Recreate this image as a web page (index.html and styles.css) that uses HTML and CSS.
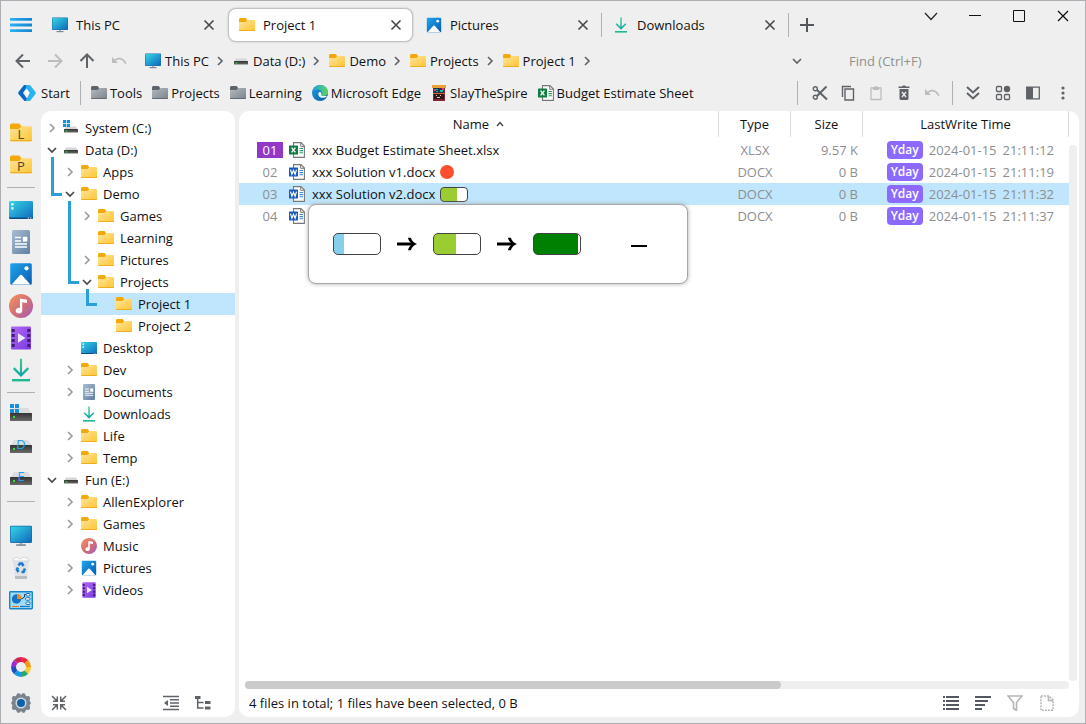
FILE: index.html
```html
<!DOCTYPE html>
<html lang="en">
<head>
<meta charset="utf-8">
<meta name="viewport" content="width=device-width, initial-scale=1">
<title>Project 1</title>
<link rel="stylesheet" href="styles.css">
</head>
<body>
<svg class="defs" aria-hidden="true">
  <defs>
    <linearGradient id="gFolder" x1="0" y1="0" x2="1" y2="1"><stop offset="0" stop-color="#ffe59c"/><stop offset="1" stop-color="#ffc533"/></linearGradient>
    <linearGradient id="gGray" x1="0" y1="0" x2="1" y2="1"><stop offset="0" stop-color="#b5babf"/><stop offset="1" stop-color="#7b838b"/></linearGradient>
    <linearGradient id="gScreen" x1="0" y1="0" x2="1" y2="1"><stop offset="0" stop-color="#35d6e4"/><stop offset="1" stop-color="#0f68bd"/></linearGradient>
    <linearGradient id="gPic" x1="0" y1="0" x2="1" y2="1"><stop offset="0" stop-color="#1ea5ee"/><stop offset="1" stop-color="#0a5cb0"/></linearGradient>
    <linearGradient id="gDoc" x1="0" y1="0" x2="1" y2="1"><stop offset="0" stop-color="#a9bdd2"/><stop offset="1" stop-color="#607fa2"/></linearGradient>
    <linearGradient id="gMusic" x1="0" y1="0" x2="1" y2="1"><stop offset="0" stop-color="#f7935a"/><stop offset=".55" stop-color="#cf6e77"/><stop offset="1" stop-color="#a05cc0"/></linearGradient>
    <linearGradient id="gVideo" x1="0" y1="0" x2="1" y2="1"><stop offset="0" stop-color="#b268f5"/><stop offset="1" stop-color="#7a3be0"/></linearGradient>
    <linearGradient id="gDown" x1="0" y1="0" x2="0" y2="1"><stop offset="0" stop-color="#37cf8a"/><stop offset="1" stop-color="#0fa3a6"/></linearGradient>
    <linearGradient id="gDrive" x1="0" y1="0" x2="0" y2="1"><stop offset="0" stop-color="#333"/><stop offset="1" stop-color="#6a6a6a"/></linearGradient>
    <linearGradient id="gMenu" x1="0" y1="0" x2="1" y2="0"><stop offset="0" stop-color="#2bb0f5"/><stop offset="1" stop-color="#1583cf"/></linearGradient>
    <linearGradient id="gEdge" x1="0" y1="0" x2="1" y2="1"><stop offset="0" stop-color="#1a9be0"/><stop offset="1" stop-color="#0c59a4"/></linearGradient>
    <linearGradient id="gEdgeTop" x1="0" y1="0" x2="1" y2="0"><stop offset="0" stop-color="#1d9fe2"/><stop offset="1" stop-color="#5fd65c"/></linearGradient>
  </defs>
  <symbol id="folder" viewBox="0 0 16 16"><path d="M0 2.500Q0 1 1.200 1H6.500L8 2.500V5H0Z" fill="#f3a90a"/><path d="M0 5H6.500L8.500 3H15Q16 3 16 4V13Q16 14 15 14H1Q0 14 0 13Z" fill="url(#gFolder)"/><path d="M0 13H16Q16 14 15 14H1Q0 14 0 13Z" fill="#eeae22"/></symbol>
  <symbol id="folder-gray" viewBox="0 0 16 16"><path d="M0 2.500Q0 1 1.200 1H6.500L8 2.500V5H0Z" fill="#5d646b"/><path d="M0 5H6.500L8.500 3H15Q16 3 16 4V13Q16 14 15 14H1Q0 14 0 13Z" fill="url(#gGray)"/><path d="M0 13H16Q16 14 15 14H1Q0 14 0 13Z" fill="#626a72"/></symbol>
  <symbol id="pc" viewBox="0 0 16 16"><path d="M7 12H9V14.500H7Z" fill="#aab2ba"/><rect x="4.500" y="14" width="7" height="1.200" fill="#7f8a94"/><rect width="16" height="12.500" y=".5" rx=".8" fill="#1b6aa5"/><rect x=".5" y="1" width="15" height="11.500" rx=".4" fill="url(#gScreen)"/></symbol>
  <symbol id="desktop" viewBox="0 0 16 16"><rect y="2" width="16" height="12" rx=".9" fill="url(#gScreen)"/><path d="M1.500 3.500H3V5H1.500ZM1.500 6.200H3V7.700H1.500Z" fill="#fff"/><path d="M0 13H16Q16 14 15 14H1Q0 14 0 13Z" fill="#0c4c85"/><path d="M12.500 13H13.300V13.600H12.500ZM14.100 13H14.900V13.600H14.100Z" fill="#fff"/></symbol>
  <symbol id="document" viewBox="0 0 16 16"><rect x="2" width="12" height="16" rx="1" fill="url(#gDoc)"/><path d="M4 5H8M4 7.300H8M4 9.300H12M4 11.300H12" stroke="#fff" stroke-width=".9"/><rect x="9.200" y="4.500" width="3" height="3.200" fill="#fff"/></symbol>
  <symbol id="picture" viewBox="0 0 16 16"><rect x=".8" y=".8" width="14.400" height="14.400" rx="1" fill="url(#gPic)"/><path d="M1.800 15L7.300 8.800Q8 8.100 8.700 8.800L14.200 15Z" fill="#fff"/><circle cx="11.700" cy="4.200" r="1.400" fill="#fff"/></symbol>
  <symbol id="music" viewBox="0 0 16 16"><circle cx="8" cy="8" r="8" fill="url(#gMusic)"/><path d="M7.300 3L12 3.800V6L8.800 5.500V11A2.200 1.900 0 1 1 7.300 9.300Z" fill="#fff"/></symbol>
  <symbol id="video" viewBox="0 0 16 16"><rect x="1.300" y=".3" width="13.400" height="15.400" rx=".8" fill="url(#gVideo)"/><path d="M1.800 2H3.800V4H1.800ZM1.800 5.300H3.800V7.300H1.800ZM1.800 8.700H3.800V10.700H1.800ZM1.800 12H3.800V14H1.800ZM12.200 2H14.200V4H12.200ZM12.200 5.300H14.200V7.300H12.200ZM12.200 8.700H14.200V10.700H12.200ZM12.200 12H14.200V14H12.200Z" fill="#3c1d78"/><path d="M6 4.800L11 8L6 11.200Z" fill="#f0e8ff"/></symbol>
  <symbol id="download" viewBox="0 0 16 16"><path d="M7.300 .5H8.700V9.800L12.300 6.200L13.400 7.300L8 12.700L2.600 7.300L3.700 6.200L7.300 9.800Z" fill="url(#gDown)"/><rect x="2" y="14" width="12" height="1.600" fill="#1dba93"/></symbol>
  <symbol id="drive" viewBox="0 0 16 16"><path d="M3 5.500H13L15 9H1Z" fill="#d6d6da"/><rect x="1" y="8" width="14" height="3.600" rx=".5" fill="url(#gDrive)"/><rect x="2.800" y="9.200" width="1.400" height="1.300" fill="#2fe03a"/></symbol>
  <symbol id="drive-c" viewBox="0 0 16 16"><path d="M3 6.500H13L15 10H1Z" fill="#d6d6da"/><rect x="1" y="9" width="14" height="3.600" rx=".5" fill="url(#gDrive)"/><rect x="2.800" y="10.200" width="1.400" height="1.300" fill="#2fe03a"/><path d="M0 0H3.200V3.200H0ZM3.900 0H7V3.200H3.900ZM0 3.900H3.200V7H0ZM3.900 3.900H7V7H3.900Z" fill="#1490df"/></symbol>
  <symbol id="drive-lg" viewBox="0 0 24 24"><path d="M5 5H19L23 11H1Z" fill="#dcdce0"/><rect x="1" y="10" width="22" height="8" rx=".6" fill="url(#gDrive)"/><rect x="4" y="13" width="2" height="2" fill="#2fe03a"/></symbol>
  <symbol id="drive-c-lg" viewBox="0 0 24 24"><path d="M5 5H19L23 11H1Z" fill="#dcdce0"/><rect x="1" y="10" width="22" height="8" rx=".6" fill="url(#gDrive)"/><rect x="4" y="13" width="2" height="2" fill="#2fe03a"/><path d="M1 1H5V5H1ZM6 1H10V5H6ZM1 6H5V10H1ZM6 6H10V10H6Z" fill="#1490df"/></symbol>
  <symbol id="xlsx" viewBox="0 0 16 16"><path d="M4.500 .6H12L15.400 4V15.400H4.500Z" fill="#fff" stroke="#777" stroke-width="1.100"/><path d="M11.700 .6V4.300H15.400" fill="none" stroke="#777"/><path d="M10.500 6.500H14M10.500 8.600H14M10.500 10.700H14" stroke="#2f9d63" stroke-width="1.100"/><rect y="3.500" width="9" height="9" rx=".6" fill="#107c41"/><path d="M2.600 5.600L6.400 10.400M6.400 5.600L2.600 10.400" stroke="#fff" stroke-width="1.400"/></symbol>
  <symbol id="docx" viewBox="0 0 16 16"><path d="M4.500 .6H12L15.400 4V15.400H4.500Z" fill="#fff" stroke="#777" stroke-width="1.100"/><path d="M11.700 .6V4.300H15.400" fill="none" stroke="#777"/><path d="M10.500 6.500H14M10.500 8.600H14M10.500 10.700H14" stroke="#3c8bd9" stroke-width="1.100"/><rect y="3.500" width="9" height="9" rx=".6" fill="#185abd"/><path d="M1.500 5.700L2.900 10.300L4.500 6.300L6.100 10.300L7.500 5.700" fill="none" stroke="#fff" stroke-width="1.200"/></symbol>
  <symbol id="edge" viewBox="0 0 16 16"><circle cx="8" cy="8" r="8" fill="url(#gEdge)"/><path d="M.4 6.500C1.500 2.500 4.500 0 8.200 0C12.800 0 16 3.300 16 7C16 9.500 14 11 11.800 11C10 11 9.200 10.300 9.600 9.500C10.500 7.500 9 4.800 6 4.800C3.500 4.800 1.200 5.400 .4 6.500Z" fill="url(#gEdgeTop)"/><path d="M6.300 8.500C6 11.500 8.500 13 11 12.800C12.800 12.700 14.200 11.800 15 11.200C13.500 10.800 9.300 11.800 9.300 9.700C9.600 8.700 9.500 7.500 8.200 7C7.200 7 6.400 7.500 6.300 8.500Z" fill="#e9f4fb"/></symbol>
  <symbol id="spire" viewBox="0 0 16 16"><rect x="2" y="1" width="12" height="15" fill="#7d2530"/><rect x="1" y="0" width="14" height="3" fill="#eaa13a"/><rect x="3" y="3" width="10" height="5" fill="#223146"/><path d="M3 4H5V6H3ZM11 3H13V5H11Z" fill="#d13c8a"/><path d="M5 4H7V5H5ZM9 5H12V7H9ZM5 6H7V7H5Z" fill="#1fb5a5"/><rect x="3" y="9" width="10" height="5" fill="#2b1a22"/><path d="M5 10H6V11H5ZM9 10H10V11H9ZM6 12H9V13H6Z" fill="#e8c8a0"/><path d="M2 8H14V9H2Z" fill="#d4663a"/></symbol>
  <symbol id="start" viewBox="0 0 20 18"><path d="M7 1H11L8 6L6 9L12 17H7.500L1.500 10Q.8 9 1.500 8Z" fill="#0c66c4"/><path d="M8 1H13L18.500 8Q19.200 9 18.500 10L13 17H8.500L12.500 9.500Q13 8.700 12 8.300L10 7.500Q8.500 7 8.500 5.500L9.500 2Z" fill="#2bb3f0"/><path d="M9.700 4.500L12.500 8.500L8.500 14L10 10L8 8.500Z" fill="#fff"/></symbol>
  <symbol id="bin" viewBox="0 0 24 24"><path d="M4 4L20 4L18 23H6Z" fill="#dfe3e6"/><path d="M4 3L8 1L11 3L15 1L20 3V5H4Z" fill="#f8f9fa" stroke="#c7ccd0" stroke-width=".7"/><path d="M6 20H18V23H6Z" fill="#b8bec3"/><path d="M9.500 9.500L11 7.500H13L14.500 10M16 12.500L14.500 16H12.500M9.500 16L8 13.500L9 11.500" fill="none" stroke="#1a7bd0" stroke-width="2.600"/></symbol>
  <symbol id="control" viewBox="0 0 24 24"><rect x=".7" y="3.700" width="22.600" height="17" rx=".7" fill="#9edcf8" stroke="#1585c5" stroke-width="1.400"/><circle cx="7.500" cy="11" r="4.700" fill="#1573c6"/><path d="M8 6A5 5 0 0 1 13 11H8Z" fill="#f08a1d"/><path d="M12.500 11L15.500 9V6.500H17" fill="none" stroke="#123f68"/><rect x="17" y="5.500" width="4" height="2.500" rx="1" fill="#fff" stroke="#1671ba"/><rect x="16.500" y="9.700" width="4.500" height="2.500" rx="1" fill="#fff" stroke="#1671ba"/><rect x="17" y="14" width="4" height="2.500" rx="1" fill="#fff" stroke="#1671ba"/><path d="M3 18.500H10" stroke="#d9822b" stroke-width="1.200"/><path d="M11 18.500H21" stroke="#1573c6" stroke-width="1.200"/></symbol>
  <symbol id="wheel" viewBox="0 0 24 24"><g fill="none" stroke-width="5"><path d="M12 4.500A7.500 7.500 0 0 1 17.300 6.700" stroke="#ee2b3b"/><path d="M17.300 6.700A7.500 7.500 0 0 1 19.500 12" stroke="#f09b12"/><path d="M19.500 12A7.500 7.500 0 0 1 17.300 17.300" stroke="#fcc933"/><path d="M17.300 17.300A7.500 7.500 0 0 1 12 19.500" stroke="#27a76a"/><path d="M12 19.500A7.500 7.500 0 0 1 6.700 17.300" stroke="#1898e0"/><path d="M6.700 17.300A7.500 7.500 0 0 1 4.500 12" stroke="#1c4fc0"/><path d="M4.500 12A7.500 7.500 0 0 1 6.700 6.700" stroke="#9a2fd0"/><path d="M6.700 6.700A7.500 7.500 0 0 1 12 4.500" stroke="#cf2257"/></g></symbol>
  <symbol id="gear" viewBox="0 0 24 24"><path d="M8.500 2.300H10.500L12 4L13.500 2.300H15.500L17.300 5.300L20 5L21.300 7L20.500 9.500L22 12L20.500 14.500L21.300 17L20 19L17.300 18.700L15.500 21.700H13.500L12 20L10.500 21.700H8.500L6.700 18.700L4 19L2.700 17L3.500 14.500L2 12L3.500 9.500L2.700 7L4 5L6.700 5.300Z" fill="#7b848d"/><circle cx="12" cy="12" r="5.500" fill="#cfd9e2"/><circle cx="12" cy="12" r="4" fill="#1161a9"/></symbol>
  <symbol id="chev" viewBox="0 0 16 16"><path d="M6 4L10 8L6 12" fill="none" stroke="currentColor" stroke-width="1.600"/></symbol>
  <symbol id="chev-down" viewBox="0 0 16 16"><path d="M4 6L8 10L12 6" fill="none" stroke="currentColor" stroke-width="1.700"/></symbol>
  <symbol id="close" viewBox="0 0 16 16"><path d="M3.500 3.500L12.500 12.500M12.500 3.500L3.500 12.500" stroke="currentColor" stroke-width="1.600"/></symbol>
  <symbol id="arrow" viewBox="0 0 16 16"><path d="M15 8H2M8 1.500L1.500 8L8 14.500" fill="none" stroke="currentColor" stroke-width="2"/></symbol>
  <symbol id="undo" viewBox="0 0 16 16"><path d="M1 4V10H7L4.800 7.800C8 5 12 6.500 14 11L15.600 10.400C13.300 4.800 7.500 3.300 3.600 6.600Z" fill="currentColor"/></symbol>
</svg>

<div class="window">
  <header class="titlebar">
    <button class="menu" aria-label="Menu"><svg width="22" height="16" viewBox="0 0 22 16"><path d="M0 1H22V3.800H0ZM0 6.600H22V9.400H0ZM0 12.200H22V15H0Z" fill="url(#gMenu)"/></svg></button>
    <div class="tabs">
      <div class="tab"><button class="tab-label"><svg class="i16"><use href="#pc"/></svg>This PC</button><button class="x" aria-label="Close This PC"><svg class="i16"><use href="#close"/></svg></button></div>
      <div class="tab active"><button class="tab-label"><svg class="i16"><use href="#folder"/></svg>Project 1</button><button class="x" aria-label="Close Project 1"><svg class="i16"><use href="#close"/></svg></button></div>
      <div class="tab ruled"><button class="tab-label"><svg class="i16"><use href="#picture"/></svg>Pictures</button><button class="x" aria-label="Close Pictures"><svg class="i16"><use href="#close"/></svg></button></div>
      <div class="tab ruled"><button class="tab-label"><svg class="i16"><use href="#download"/></svg>Downloads</button><button class="x" aria-label="Close Downloads"><svg class="i16"><use href="#close"/></svg></button></div>
      <button class="new-tab" aria-label="New tab"><svg class="i16" viewBox="0 0 16 16"><path d="M8 1V15M1 8H15" stroke="#53575c" stroke-width="2"/></svg></button>
    </div>
    <div class="controls">
      <button aria-label="More"><svg class="i16" viewBox="0 0 16 16"><path d="M2 5L8 11.500L14 5" fill="none" stroke="#222" stroke-width="1.200"/></svg></button>
      <button aria-label="Minimize"><svg class="i16" viewBox="0 0 16 16"><path d="M2 7.500H14" stroke="#111"/></svg></button>
      <button aria-label="Maximize"><svg class="i16" viewBox="0 0 16 16"><path d="M2.500 2.500H13.500V13.500H2.500Z" fill="none" stroke="#111"/></svg></button>
      <button aria-label="Close"><svg class="i16" viewBox="0 0 16 16"><path d="M3 3L13 13M13 3L3 13" stroke="#111" stroke-width="1.300"/></svg></button>
    </div>
  </header>

  <div class="navbar">
    <div class="nav-buttons">
      <button aria-label="Back"><svg class="i16"><use href="#arrow"/></svg></button>
      <button aria-label="Forward" disabled><svg class="i16 flip"><use href="#arrow"/></svg></button>
      <button aria-label="Up"><svg class="i16 up"><use href="#arrow"/></svg></button>
      <button aria-label="Undo" disabled><svg class="i16"><use href="#undo"/></svg></button>
    </div>
    <nav class="crumbs">
      <a href="#"><svg class="i16"><use href="#pc"/></svg>This PC</a><svg class="i16 sep"><use href="#chev"/></svg>
      <a href="#"><svg class="i16"><use href="#drive"/></svg>Data (D:)</a><svg class="i16 sep"><use href="#chev"/></svg>
      <a href="#"><svg class="i16"><use href="#folder"/></svg>Demo</a><svg class="i16 sep"><use href="#chev"/></svg>
      <a href="#"><svg class="i16"><use href="#folder"/></svg>Projects</a><svg class="i16 sep"><use href="#chev"/></svg>
      <a href="#"><svg class="i16"><use href="#folder"/></svg>Project 1</a><svg class="i16 sep"><use href="#chev"/></svg>
    </nav>
    <button class="history" aria-label="History"><svg class="i16"><use href="#chev-down"/></svg></button>
    <input class="find" type="search" placeholder="Find (Ctrl+F)" aria-label="Find">
  </div>

  <div class="bookmarks">
    <button class="start"><svg width="20" height="18"><use href="#start"/></svg>Start</button>
    <span class="vline"></span>
    <nav class="links">
      <a href="#"><svg class="i16"><use href="#folder-gray"/></svg>Tools</a>
      <a href="#"><svg class="i16"><use href="#folder-gray"/></svg>Projects</a>
      <a href="#"><svg class="i16"><use href="#folder-gray"/></svg>Learning</a>
      <a href="#"><svg class="i16"><use href="#edge"/></svg>Microsoft Edge</a>
      <a href="#"><svg class="i16"><use href="#spire"/></svg>SlayTheSpire</a>
      <a href="#"><svg class="i16"><use href="#xlsx"/></svg>Budget Estimate Sheet</a>
    </nav>
    <div class="tools">
      <span class="vline"></span>
      <div class="edit">
        <button aria-label="Cut"><svg class="i16" viewBox="0 0 16 16"><g fill="none" stroke="currentColor" stroke-width="1.400"><circle cx="3.300" cy="3.800" r="2"/><circle cx="3.300" cy="12.200" r="2"/></g><path d="M5 5L15 14.500M5 11L14.500 1.500" stroke="currentColor" stroke-width="2"/></svg></button>
        <button aria-label="Copy"><svg class="i16" viewBox="0 0 16 16"><path d="M5 4H13.500V15H5ZM2.500 12V1.500H11" fill="none" stroke="currentColor" stroke-width="1.400"/></svg></button>
        <button aria-label="Paste" disabled><svg class="i16" viewBox="0 0 16 16"><path d="M3 3H13V14.500H3Z" fill="none" stroke="currentColor" stroke-width="1.300"/><path d="M5 2H6.500Q8 0 9.500 2H11V5H5Z" fill="currentColor"/></svg></button>
        <button aria-label="Delete"><svg class="i16" viewBox="0 0 16 16"><path d="M2.500 1.500H6L7 .5H9L10 1.500H13.500V3H2.500ZM3.500 4H12.500V13.500Q12.500 15 11 15H5Q3.500 15 3.500 13.500Z" fill="currentColor"/><path d="M6 7L10 12M10 7L6 12" stroke="#efefef" stroke-width="1.300"/></svg></button>
        <button aria-label="Undo" disabled><svg class="i16"><use href="#undo"/></svg></button>
      </div>
      <span class="vline"></span>
      <div class="view">
        <button aria-label="Expand"><svg class="i16" viewBox="0 0 16 16"><path d="M2 2L8 7.500L14 2M2 8L8 13.500L14 8" fill="none" stroke="currentColor" stroke-width="2"/></svg></button>
        <button aria-label="Layout"><svg class="i16" viewBox="0 0 16 16"><g fill="none" stroke="currentColor" stroke-width="1.300"><rect x="1.500" y="1.500" width="5" height="5" rx="1"/><rect x="1.500" y="9.500" width="5" height="5" rx="1"/><rect x="9.500" y="9.500" width="5" height="5" rx="1"/></g><circle cx="12" cy="4" r="3.200" fill="currentColor"/></svg></button>
        <button aria-label="Panel"><svg class="i16" viewBox="0 0 16 16"><path d="M1.700 2.200H14.300V13.800H1.700Z" fill="none" stroke="currentColor" stroke-width="1.300"/><path d="M2 2H8V14H2Z" fill="currentColor"/></svg></button>
        <button aria-label="More options"><svg class="i16" viewBox="0 0 16 16"><g fill="currentColor"><circle cx="8" cy="3" r="1.600"/><circle cx="8" cy="8" r="1.600"/><circle cx="8" cy="13" r="1.600"/></g></svg></button>
      </div>
    </div>
  </div>

  <div class="body">
    <nav class="rail">
      <a href="#" aria-label="Learning folder"><svg class="i22"><use href="#folder"/></svg><span class="letter">L</span></a>
      <a href="#" aria-label="Projects folder"><svg class="i22"><use href="#folder"/></svg><span class="letter">P</span></a>
      <hr>
      <a href="#" aria-label="Desktop"><svg class="i24"><use href="#desktop"/></svg></a>
      <a href="#" aria-label="Documents"><svg class="i24"><use href="#document"/></svg></a>
      <a href="#" aria-label="Pictures"><svg class="i24"><use href="#picture"/></svg></a>
      <a href="#" aria-label="Music"><svg class="i24"><use href="#music"/></svg></a>
      <a href="#" aria-label="Videos"><svg class="i24"><use href="#video"/></svg></a>
      <a href="#" aria-label="Downloads"><svg class="i24"><use href="#download"/></svg></a>
      <hr>
      <a href="#" aria-label="Drive C"><svg class="i24"><use href="#drive-c-lg"/></svg></a>
      <a href="#" aria-label="Drive D"><svg class="i24"><use href="#drive-lg"/></svg><span class="letter blue">D</span></a>
      <a href="#" aria-label="Drive E"><svg class="i24"><use href="#drive-lg"/></svg><span class="letter blue">E</span></a>
      <hr class="wide">
      <a href="#" aria-label="This PC"><svg class="i22"><use href="#pc"/></svg></a>
      <a href="#" aria-label="Recycle bin"><svg class="i24"><use href="#bin"/></svg></a>
      <a href="#" aria-label="Control panel"><svg class="i24"><use href="#control"/></svg></a>
      <div class="rail-foot">
        <button aria-label="Colours"><svg class="i24"><use href="#wheel"/></svg></button>
        <button aria-label="Settings"><svg class="i24"><use href="#gear"/></svg></button>
      </div>
    </nav>

    <aside class="tree-panel">
      <ul class="tree">
        <li class="d0"><svg class="i16 tw"><use href="#chev"/></svg><svg class="i16"><use href="#drive-c"/></svg><a href="#">System (C:)</a></li>
        <li class="d0 line-a"><svg class="i16 tw open"><use href="#chev-down"/></svg><svg class="i16"><use href="#drive"/></svg><a href="#">Data (D:)</a></li>
        <li class="d1"><svg class="i16 tw"><use href="#chev"/></svg><svg class="i16"><use href="#folder"/></svg><a href="#">Apps</a></li>
        <li class="d1 line-b"><svg class="i16 tw open"><use href="#chev-down"/></svg><svg class="i16"><use href="#folder"/></svg><a href="#">Demo</a></li>
        <li class="d2"><svg class="i16 tw"><use href="#chev"/></svg><svg class="i16"><use href="#folder"/></svg><a href="#">Games</a></li>
        <li class="d2"><span class="tw"></span><svg class="i16"><use href="#folder"/></svg><a href="#">Learning</a></li>
        <li class="d2"><svg class="i16 tw"><use href="#chev"/></svg><svg class="i16"><use href="#folder"/></svg><a href="#">Pictures</a></li>
        <li class="d2 line-c"><svg class="i16 tw open"><use href="#chev-down"/></svg><svg class="i16"><use href="#folder"/></svg><a href="#">Projects</a></li>
        <li class="d3 selected"><span class="tw"></span><svg class="i16"><use href="#folder"/></svg><a href="#">Project 1</a></li>
        <li class="d3"><span class="tw"></span><svg class="i16"><use href="#folder"/></svg><a href="#">Project 2</a></li>
        <li class="d1"><span class="tw"></span><svg class="i16"><use href="#desktop"/></svg><a href="#">Desktop</a></li>
        <li class="d1"><svg class="i16 tw"><use href="#chev"/></svg><svg class="i16"><use href="#folder"/></svg><a href="#">Dev</a></li>
        <li class="d1"><svg class="i16 tw"><use href="#chev"/></svg><svg class="i16"><use href="#document"/></svg><a href="#">Documents</a></li>
        <li class="d1"><span class="tw"></span><svg class="i16"><use href="#download"/></svg><a href="#">Downloads</a></li>
        <li class="d1"><svg class="i16 tw"><use href="#chev"/></svg><svg class="i16"><use href="#folder"/></svg><a href="#">Life</a></li>
        <li class="d1"><svg class="i16 tw"><use href="#chev"/></svg><svg class="i16"><use href="#folder"/></svg><a href="#">Temp</a></li>
        <li class="d0"><svg class="i16 tw open"><use href="#chev-down"/></svg><svg class="i16"><use href="#drive"/></svg><a href="#">Fun (E:)</a></li>
        <li class="d1"><svg class="i16 tw"><use href="#chev"/></svg><svg class="i16"><use href="#folder"/></svg><a href="#">AllenExplorer</a></li>
        <li class="d1"><svg class="i16 tw"><use href="#chev"/></svg><svg class="i16"><use href="#folder"/></svg><a href="#">Games</a></li>
        <li class="d1"><span class="tw"></span><svg class="i16"><use href="#music"/></svg><a href="#">Music</a></li>
        <li class="d1"><svg class="i16 tw"><use href="#chev"/></svg><svg class="i16"><use href="#picture"/></svg><a href="#">Pictures</a></li>
        <li class="d1"><svg class="i16 tw"><use href="#chev"/></svg><svg class="i16"><use href="#video"/></svg><a href="#">Videos</a></li>
      </ul>
      <div class="tree-foot">
        <button aria-label="Collapse all"><svg class="i16" viewBox="0 0 16 16"><path d="M1 1L6 6M2 6.300H6.300V1.500M15 1L10 6M14 6.300H9.700V1.500M1 15L6 10M2 9.700H6.300V14.500M15 15L10 10M14 9.700H9.700V14.500" fill="none" stroke="currentColor" stroke-width="1.500"/></svg></button>
        <span class="grow"></span>
        <button aria-label="Outdent"><svg class="i16" viewBox="0 0 16 16"><path d="M0 1.500H16M7 4.800H16M7 8H16M7 11.200H16M0 14.500H16" stroke="currentColor" stroke-width="1.400"/><path d="M5 5V11L1 8Z" fill="currentColor"/></svg></button>
        <button aria-label="Tree view"><svg class="i16" viewBox="0 0 16 16"><path d="M0 1H5.500V4H0ZM10 6H15.500V9H10ZM10 11.500H15.500V14.500H10Z" fill="currentColor"/><path d="M2.700 4V13H8.500M2.700 7.500H8.500" fill="none" stroke="currentColor" stroke-width="1.500"/></svg></button>
      </div>
    </aside>

    <main class="files">
      <div class="list">
        <table>
          <colgroup><col><col class="c-type"><col class="c-size"><col class="c-time"></colgroup>
          <thead><tr><th><div class="head">Name<svg width="8" height="6" viewBox="0 0 8 6"><path d="M1 5L4 1.500L7 5" fill="none" stroke="#444" stroke-width="1.400"/></svg></div></th><th><div class="head">Type</div></th><th><div class="head">Size</div></th><th><div class="head">LastWrite Time</div></th></tr></thead>
          <tbody>
            <tr><td><div class="name"><span class="num marked">01</span><svg class="i16"><use href="#xlsx"/></svg>xxx Budget Estimate Sheet.xlsx</div></td><td class="type">XLSX</td><td class="size">9.57 K</td><td><div class="time"><b>Yday</b><span>2024-01-15</span><span>21:11:12</span></div></td></tr>
            <tr><td><div class="name"><span class="num">02</span><svg class="i16"><use href="#docx"/></svg>xxx Solution v1.docx<i class="dot"></i></div></td><td class="type">DOCX</td><td class="size">0 B</td><td><div class="time"><b>Yday</b><span>2024-01-15</span><span>21:11:19</span></div></td></tr>
            <tr class="selected"><td><div class="name"><span class="num">03</span><svg class="i16"><use href="#docx"/></svg>xxx Solution v2.docx<i class="bar small half"></i></div>
              <div class="popup">
                <button class="bar low" aria-label="Started"></button>
                <svg class="go" viewBox="0 0 20 14"><path d="M0 5.500H14C12.500 4.500 11.300 3 11 .7H13.800C15 4 17 6 20 7C17 8 15 10 13.800 13.300H11C11.300 11 12.500 9.500 14 8.500H0Z"/></svg>
                <button class="bar half" aria-label="Half done"></button>
                <svg class="go" viewBox="0 0 20 14"><path d="M0 5.500H14C12.500 4.500 11.300 3 11 .7H13.800C15 4 17 6 20 7C17 8 15 10 13.800 13.300H11C11.300 11 12.500 9.500 14 8.500H0Z"/></svg>
                <button class="bar full" aria-label="Done"></button>
                <button class="clear" aria-label="Clear"></button>
              </div></td><td class="type">DOCX</td><td class="size">0 B</td><td><div class="time"><b>Yday</b><span>2024-01-15</span><span>21:11:32</span></div></td></tr>
            <tr><td><div class="name"><span class="num">04</span><svg class="i16"><use href="#docx"/></svg></div></td><td class="type">DOCX</td><td class="size">0 B</td><td><div class="time"><b>Yday</b><span>2024-01-15</span><span>21:11:37</span></div></td></tr>
          </tbody>
        </table>
        <div class="vscroll"></div>
      </div>
      <div class="hscroll"><div class="thumb"></div></div>
      <footer class="status">
        <span class="grow">4 files in total; 1 files have been selected, 0 B</span>
        <button aria-label="List view"><svg class="i16" viewBox="0 0 16 16"><path d="M0 2H2M3 2H16M0 6H2M3 6H16M0 10H2M3 10H16M0 14H2M3 14H16" stroke="currentColor" stroke-width="1.800"/></svg></button>
        <button aria-label="Sort"><svg class="i16" viewBox="0 0 16 16"><path d="M0 2H16M0 6H13M0 10H10M0 14H7" stroke="currentColor" stroke-width="1.800"/></svg></button>
        <button aria-label="Filter" disabled><svg class="i16" viewBox="0 0 16 16"><path d="M1 1H15L9.500 7.500V15.500L6.500 13.500V7.500Z" fill="none" stroke="currentColor" stroke-width="1.600"/></svg></button>
        <button aria-label="New file" disabled><svg class="i16" viewBox="0 0 16 16"><path d="M2 1H10L14 5V15.300H2Z" fill="none" stroke="currentColor" stroke-width="1.500" stroke-dasharray="2 1"/><path d="M9.500 1V5.500H14" fill="none" stroke="currentColor" stroke-width="1.500"/></svg></button>
      </footer>
    </main>
  </div>
</div>
</body>
</html>
```
FILE: styles.css
```css
*, *::before, *::after { box-sizing: border-box; }

body {
  margin: 0;
  font-family: "Open Sans", "Noto Sans", sans-serif;
  font-size: 13px;
  line-height: 18px;
  color: #111;
}

button, input { font: inherit; color: inherit; }
button { border: 0; padding: 0; background: none; display: flex; align-items: center; justify-content: center; }
a { color: inherit; text-decoration: none; }
svg { display: block; flex: none; }
.defs { position: absolute; width: 0; height: 0; }
.i16 { width: 16px; height: 16px; }
.i22 { width: 22px; height: 22px; }
.i24 { width: 24px; height: 24px; }
.grow { flex: 1; }

.window {
  display: flex;
  flex-direction: column;
  min-height: 100vh;
  border: 1px solid #adadb3;
  background: #efefef;
}

/* Title bar */
.titlebar { display: flex; align-items: flex-start; height: 44px; }
.menu { width: 40px; height: 48px; }
.tabs { display: flex; flex: 1; padding-top: 7px; }
.tab {
  display: flex;
  align-items: center;
  flex: 0 1 185px;
  height: 34px;
  margin-right: 2px;
  padding: 0 8px 0 10px;
  border: 1px solid transparent;
  border-radius: 8px;
}
.tab.active { background: #fff; border-color: #c2c2c4; box-shadow: 0 0 2px #b8b8ba; }
.tab.ruled { position: relative; }
.tab.ruled::after { content: ""; position: absolute; right: -3px; top: 4px; width: 1px; height: 24px; background: #b0b0b4; }
.tab-label { flex: 1; gap: 8px; justify-content: flex-start; }
.x { color: #45484c; }
.new-tab { width: 36px; height: 34px; }
.controls { display: flex; }
.controls button { width: 44px; height: 30px; }

/* Navigation */
.navbar { display: flex; align-items: center; height: 32px; padding-left: 6px; }
.nav-buttons { display: flex; color: #5f6368; }
.nav-buttons button { width: 32px; height: 32px; }
.nav-buttons button:disabled { color: #bdbdbd; }
.flip { transform: rotate(180deg); }
.up { transform: rotate(90deg); }
.crumbs { display: flex; align-items: center; flex: 1; padding-left: 10px; }
.crumbs a { display: flex; align-items: center; gap: 4px; }
.sep { margin: 0 5px 0 3px; color: #5f6368; }
.history { width: 32px; height: 32px; color: #5f6368; }
.find { width: 230px; margin-left: 28px; margin-right: 14px; padding: 0 8px; border: 0; outline: 0; background: none; }
.find::placeholder { color: #909090; opacity: 1; }

/* Bookmarks */
.bookmarks { display: flex; align-items: center; height: 32px; padding-left: 16px; }
.start { gap: 4px; margin-right: 10px; }
.vline { width: 1px; height: 24px; background: #b0b0b4; }
.links { display: flex; flex: 1; gap: 10px; padding-left: 10px; }
.links a { display: flex; align-items: center; gap: 3px; white-space: nowrap; }
.tools { display: flex; align-items: center; color: #5f6368; }
.tools button:disabled { color: #bdbdbd; }
.edit { display: flex; gap: 12px; padding: 0 12px 0 14px; }
.view { display: flex; gap: 14px; padding: 0 14px 0 12px; }

/* Body columns */
.body { display: flex; flex: 1; gap: 4px; padding: 2px 6px 6px 0; }

.rail { display: flex; flex-direction: column; align-items: center; width: 40px; margin-right: -4px; padding-top: 6px; }
.rail a { position: relative; display: flex; align-items: center; justify-content: center; width: 40px; height: 32px; }
.rail hr { width: 28px; height: 1px; margin: 6px 0; border: 0; background: #b0b0b4; }
.rail hr.wide { margin-bottom: 18px; }
.letter { position: absolute; inset: 8px 0 0; text-align: center; color: #4a4534; }
.letter.blue { inset: 4px 0 0; color: #1ca0f0; }
.rail-foot { display: flex; flex-direction: column; gap: 12px; margin-top: auto; padding-bottom: 2px; }

.tree-panel { display: flex; flex-direction: column; width: 194px; border-radius: 10px; background: #fff; }
.tree { flex: 1; margin: 0; padding: 6px 0 0; list-style: none; }
.tree li { position: relative; display: flex; align-items: center; height: 22px; }
.tree a { margin-left: 6px; }
.tree .selected { background: #bfe6fd; }
.tw { width: 16px; margin-right: 3px; color: #9a9a9a; }
.tw.open { color: #45484c; }
.d0 { padding-left: 3px; }
.d1 { padding-left: 21px; }
.d2 { padding-left: 38px; }
.d3 { padding-left: 56px; }
.line-a::after, .line-b::after, .line-c::after {
  content: "";
  position: absolute;
  z-index: 1;
  top: 18px;
  width: 11px;
  border: solid #2a9fd8;
  border-width: 0 0 3px 3px;
}
.line-a::after { left: 10px; height: 39px; }
.line-b::after { left: 27px; height: 83px; }
.line-c::after { left: 45px; height: 17px; }
.tree-foot { display: flex; gap: 16px; padding: 0 24px 6px 10px; color: #5f6368; }

/* File list */
.files { display: flex; flex: 1; flex-direction: column; min-width: 0; border-radius: 10px; background: #fff; }
.list { display: flex; flex: 1; align-items: flex-start; }
table { flex: 1; table-layout: fixed; border-collapse: collapse; min-width: 0; }
.c-type, .c-size { width: 72px; }
.c-time { width: 206px; }
th { height: 28px; padding: 0; font-weight: 400; vertical-align: top; }
.head { display: flex; align-items: center; justify-content: center; gap: 7px; height: 26px; border-right: 1px solid #dcdcde; }
td { position: relative; height: 22px; padding: 0; }
tr.selected td { background: #bfe6fd; }
.name { display: flex; align-items: center; height: 22px; padding-left: 18px; }
.name .i16 { margin: 0 7px 0 6px; }
.num { width: 26px; height: 16px; line-height: 16px; text-align: center; color: #8e8e8e; }
.num.marked { background: #9437c8; color: #fff; }
.dot { width: 14px; height: 14px; margin-left: 5px; border-radius: 50%; background: #ff4d30; }
.type, .size, .time { color: #8e8e8e; }
.type { text-align: center; }
.size { padding-right: 5px; text-align: right; }
.time { display: flex; align-items: center; justify-content: flex-end; gap: 6px; padding-right: 15px; }
.time b { padding: 0 4px; border-radius: 4px; background: #8c6aff; color: #fff; font-size: 12px; font-weight: 600; }

.bar { display: block; width: 48px; height: 22px; border: 1px solid #444; border-radius: 5px; background-color: #fff; background-repeat: no-repeat; }
.bar.small { width: 28px; height: 15px; margin-left: 5px; border-radius: 4px; }
.low { background-image: linear-gradient(#87ceeb, #87ceeb); background-size: 10px 100%; }
.half { background-image: linear-gradient(#9acd32, #9acd32); background-size: 22px 100%; }
.bar.small.half { background-size: 16px 100%; }
.full { background-image: linear-gradient(#008000, #008000); background-size: 44px 100%; }

.popup {
  position: absolute;
  z-index: 2;
  top: 21px;
  left: 69px;
  display: flex;
  align-items: center;
  gap: 16px;
  width: 380px;
  height: 80px;
  padding-left: 24px;
  border: 1px solid #a8a8a8;
  border-radius: 8px;
  background: #fff;
  box-shadow: 0 0 4px #aaa;
}
.go { width: 20px; height: 14px; }
.clear { width: 16px; height: 22px; margin-left: 34px; }
.clear::before { content: ""; width: 16px; height: 2px; margin-top: 4px; background: #000; }

.vscroll { align-self: stretch; width: 8px; margin: 34px 2px 0 0; border-radius: 4px; background: #efefef; }
.hscroll { height: 8px; margin: 0 10px 0 6px; border-radius: 4px; background: #efefef; }
.thumb { width: 65%; height: 8px; border-radius: 4px; background: #cacaca; }
.status { display: flex; align-items: center; gap: 16px; height: 28px; padding: 0 24px 0 10px; color: #111; }
.status button { color: #53575f; }
.status button:disabled { color: #b5b5b5; }
```
